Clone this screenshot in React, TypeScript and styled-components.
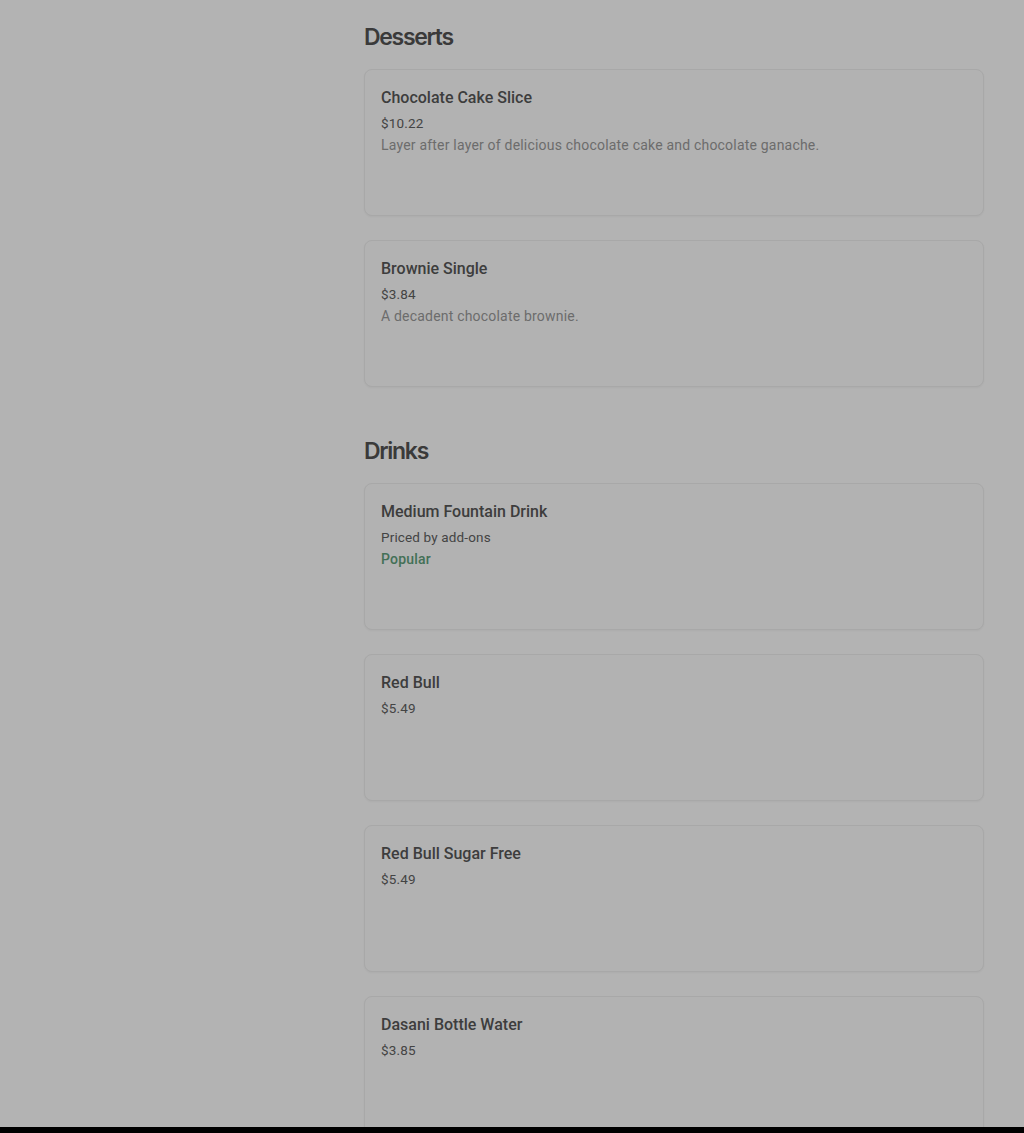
import React from 'react'
import styled, { createGlobalStyle } from 'styled-components'

type Item = {
	name: string
	price: string
	description?: string
	popular?: boolean
}

const sections: { title: string; items: Item[] }[] = [
	{
		title: 'Desserts',
		items: [
			{
				name: 'Chocolate Cake Slice',
				price: '$10.22',
				description: 'Layer after layer of delicious chocolate cake and chocolate ganache.',
			},
			{ name: 'Brownie Single', price: '$3.84', description: 'A decadent chocolate brownie.' },
		],
	},
	{
		title: 'Drinks',
		items: [
			{ name: 'Medium Fountain Drink', price: 'Priced by add-ons', popular: true },
			{ name: 'Red Bull', price: '$5.49' },
			{ name: 'Red Bull Sugar Free', price: '$5.49' },
			{ name: 'Dasani Bottle Water', price: '$3.85' },
		],
	},
]

export default function App() {
	return (
		<>
			<GlobalStyle />
			<Page>
				<Side />
				<Main>
					{sections.map((s) => (
						<Section key={s.title}>
							<Heading>{s.title}</Heading>
							<List>
								{s.items.map((x) => (
									<Card key={x.name}>
										<Name>{x.name}</Name>
										<Price>{x.price}</Price>
										{x.description && <Desc>{x.description}</Desc>}
										{x.popular && <Popular>Popular</Popular>}
									</Card>
								))}
							</List>
						</Section>
					))}
				</Main>
			</Page>
			<BottomBar />
		</>
	)
}

const GlobalStyle = createGlobalStyle`
	html, body {
		margin: 0;
		padding: 0;
		background: #b3b3b3;
		height: 1133px;
		overflow: hidden;
	}
	body {
		font-family: Roboto, 'Liberation Sans', sans-serif;
	}
`

const Page = styled.div`
	display: grid;
	grid-template-columns: 364px 620px;
	padding-top: 21px;
	height: 1133px;
	box-sizing: border-box;
	overflow: hidden;
`

const Side = styled.div``

const Main = styled.div`
	display: flex;
	flex-direction: column;
`

const Section = styled.section`
	display: flex;
	flex-direction: column;
	gap: 16px;
	margin-bottom: 48px;
`

const Heading = styled.h2`
	margin: 0;
	font-family: Inter, 'Liberation Sans', sans-serif;
	font-size: 23px;
	line-height: 32px;
	font-weight: 600;
	letter-spacing: -1.3px;
	color: #3a3a3a;
`

const List = styled.div`
	display: flex;
	flex-direction: column;
	gap: 24px;
`

const Card = styled.div`
	box-sizing: border-box;
	height: 147px;
	padding: 16px 16px;
	border: 1px solid #a8a8a8;
	border-radius: 8px;
	background: #b2b2b2;
	box-shadow: 0 1px 2px rgba(0, 0, 0, 0.04);
	display: flex;
	flex-direction: column;
`

const Name = styled.div`
	font-size: 16px;
	line-height: 24px;
	font-weight: 500;
	color: #3d3d3d;
	margin-bottom: 3px;
`

const Price = styled.div`
	font-size: 13.5px;
	line-height: 20px;
	letter-spacing: 0.15px;
	color: #444444;
	margin-bottom: 2px;
`

const Desc = styled.div`
	font-size: 14px;
	line-height: 20px;
	letter-spacing: 0.2px;
	color: #6c6c6c;
`

const Popular = styled.div`
	font-size: 14px;
	line-height: 20px;
	font-weight: 500;
	letter-spacing: 0.2px;
	color: #437056;
`

const BottomBar = styled.div`
	position: fixed;
	left: 0;
	right: 0;
	bottom: 0;
	height: 6px;
	background: #000;
`
